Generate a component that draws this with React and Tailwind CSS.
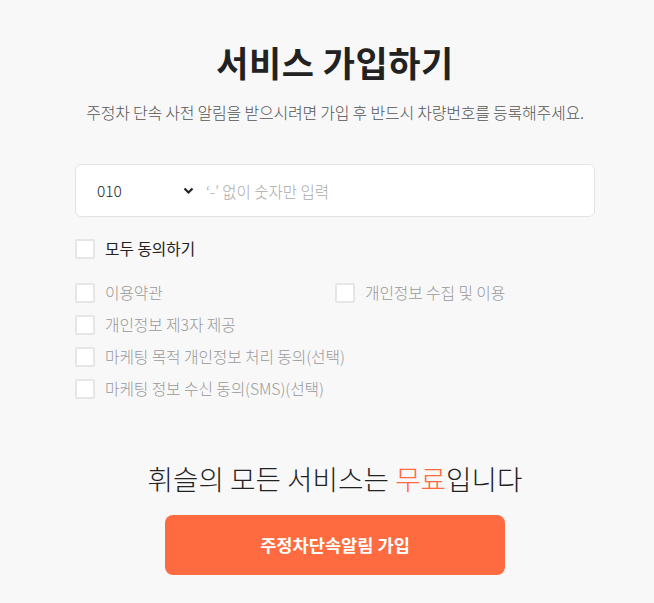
import React, { useState } from "react";

const font = { fontFamily: '"Noto Sans CJK KR", "Noto Sans", sans-serif' };

// Single agreement checkbox row
const Check = ({ label, checked, onChange, strong }) => (
  <label className="flex items-center gap-[10px] h-[20px] cursor-pointer">
    <span
      onClick={onChange}
      className={`w-[20px] h-[20px] shrink-0 border-2 rounded-[2px] bg-white flex items-center justify-center ${
        checked ? "border-[#ff6b40]" : "border-[#e6e6e6]"
      }`}
    >
      {checked && <span className="w-[10px] h-[10px] bg-[#ff6b40] rounded-[1px]" />}
    </span>
    <span
      className={
        strong
          ? "text-[15.7px] leading-[20px] text-[#222]"
          : "text-[15.8px] font-light leading-[20px] tracking-[-0.1px] text-[#999]"
      }
    >
      {label}
    </span>
  </label>
);

export default function App() {
  const [prefix, setPrefix] = useState("010");
  const [phone, setPhone] = useState("");
  const [terms, setTerms] = useState({ a: false, b: false, c: false, d: false, e: false });

  const all = Object.values(terms).every(Boolean);
  const toggle = (k) => setTerms({ ...terms, [k]: !terms[k] });
  const toggleAll = () => {
    const v = !all;
    setTerms({ a: v, b: v, c: v, d: v, e: v });
  };

  return (
    <div className="min-h-screen bg-[#f8f8f8] flex flex-col items-center pl-[16px]" style={font}>
      {/* Header */}
      <h1 className="mt-[37px] text-[35px] font-bold text-[#222] leading-[50px] tracking-[0.5px]">서비스 가입하기</h1>
      <p className="mt-[14px] text-[16px] font-light text-[#555] leading-[22px] tracking-[-0.22px]">
        주정차 단속 사전 알림을 받으시려면 가입 후 반드시 차량번호를 등록해주세요.
      </p>

      {/* Phone input */}
      <div className="mt-[41px] w-[520px] h-[53px] bg-white border border-[#e3e3e3] rounded-[6px] flex items-center">
        <div className="relative w-[126px] h-full flex items-center">
          <select
            value={prefix}
            onChange={(e) => setPrefix(e.target.value)}
            className="appearance-none bg-transparent w-full h-full pl-[21px] text-[15.5px] font-light text-[#222] outline-none"
          >
            <option value="010">010</option>
            <option value="011">011</option>
            <option value="016">016</option>
            <option value="017">017</option>
          </select>
          <svg className="absolute right-[8px] top-1/2 -translate-y-1/2 pointer-events-none" width="11" height="8" viewBox="0 0 11 8">
            <path d="M1.5 1.5 L5.5 5.5 L9.5 1.5" fill="none" stroke="#222" strokeWidth="2.2" />
          </svg>
        </div>
        <input
          value={phone}
          onChange={(e) => setPhone(e.target.value)}
          placeholder="‘-’ 없이 숫자만 입력"
          className="flex-1 h-full pl-[4px] pr-4 text-[15.5px] font-light text-[#222] placeholder:text-[#aaa] outline-none bg-transparent rounded-r-[6px]"
        />
      </div>

      {/* Agreements */}
      <div className="mt-[22px] w-[520px]">
        <Check label="모두 동의하기" strong checked={all} onChange={toggleAll} />
        <div className="mt-[24px] grid grid-cols-2 gap-y-[12px] w-[520px]">
          <Check label="이용약관" checked={terms.a} onChange={() => toggle("a")} />
          <Check label="개인정보 수집 및 이용" checked={terms.b} onChange={() => toggle("b")} />
          <div className="col-span-2">
            <Check label="개인정보 제3자 제공" checked={terms.c} onChange={() => toggle("c")} />
          </div>
          <div className="col-span-2">
            <Check label="마케팅 목적 개인정보 처리 동의(선택)" checked={terms.d} onChange={() => toggle("d")} />
          </div>
          <div className="col-span-2">
            <Check label="마케팅 정보 수신 동의(SMS)(선택)" checked={terms.e} onChange={() => toggle("e")} />
          </div>
        </div>
      </div>

      {/* Footer */}
      <p className="mt-[59px] text-[27.7px] font-light text-[#222] leading-[40px]">
        휘슬의 모든 서비스는 <span className="text-[#ff6b40]">무료</span>입니다
      </p>
      <button className="mt-[17px] w-[340px] h-[60px] bg-[#ff6b40] rounded-[8px] text-white text-[17.6px] font-bold">
        주정차단속알림 가입
      </button>
    </div>
  );
}
